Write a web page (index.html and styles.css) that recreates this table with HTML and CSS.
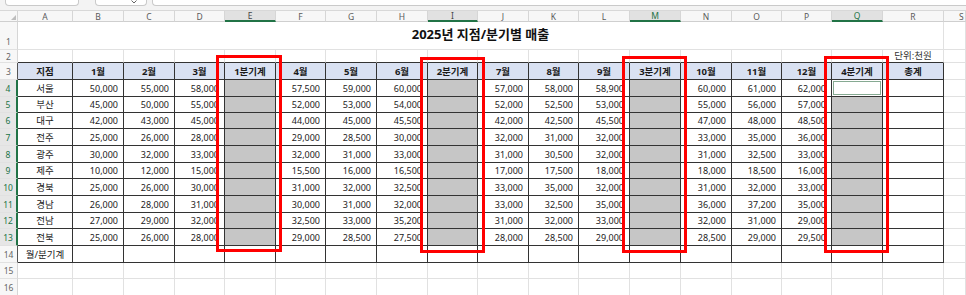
FILE: index.html
```html
<!DOCTYPE html>
<html lang="ko">
<head>
<meta charset="utf-8">
<title>2025년 지점/분기별 매출</title>
<link rel="stylesheet" href="styles.css">
</head>
<body>
<div class="app">
  <div class="toolbar">
    <div class="box name"></div>
    <div class="box fn"><svg class="chev" width="6" height="4" viewBox="0 0 6 4"><polyline points="0.5,0.5 3,3 5.5,0.5" fill="none" stroke="#666" stroke-width="1"/></svg></div>
    <div class="box formula"></div>
  </div>
  <table class="grid">
    <colgroup>
      <col class="w18"><col class="w55"><col class="w51"><col class="w51"><col class="w50"><col class="w51"><col class="w50"><col class="w51"><col class="w51"><col class="w50"><col class="w51"><col class="w50"><col class="w51"><col class="w51"><col class="w51"><col class="w50"><col class="w50"><col class="w51"><col class="w61"><col class="w22">
    </colgroup>
    <tr class="ch">
      <th class="corner"><svg width="5" height="5" viewBox="0 0 5 5"><polygon points="5,0 5,5 0,5" fill="#bdbdbd"/></svg></th>
      <th>A</th><th>B</th><th>C</th><th>D</th><th class="on dk">E</th><th>F</th><th>G</th><th>H</th><th class="on dk">I</th><th>J</th><th>K</th><th>L</th><th class="on">M</th><th>N</th><th>O</th><th>P</th><th class="on">Q</th><th>R</th><th class="sl">S</th>
    </tr>
    <tr class="h28">
      <th class="rh">1</th><td class="title" colspan="18">2025년 지점/분기별 매출</td><td></td>
    </tr>
    <tr class="h13">
      <th class="rh">2</th><td class="top"></td><td class="top"></td><td class="top"></td><td class="top"></td><td class="top"></td><td class="top"></td><td class="top"></td><td class="top"></td><td class="top"></td><td class="top"></td><td class="top"></td><td class="top"></td><td class="top"></td><td class="top"></td><td class="top"></td><td class="top"></td><td class="top"></td><td class="top unit">단위:천원</td><td></td>
    </tr>
    <tr class="tb h17">
      <th class="rh edge">3</th><td class="hd">지점</td><td class="hd">1월</td><td class="hd">2월</td><td class="hd">3월</td><td class="hd">1분기계</td><td class="hd">4월</td><td class="hd">5월</td><td class="hd">6월</td><td class="hd">2분기계</td><td class="hd">7월</td><td class="hd">8월</td><td class="hd">9월</td><td class="hd">3분기계</td><td class="hd">10월</td><td class="hd">11월</td><td class="hd">12월</td><td class="hd">4분기계</td><td class="hd">총계</td><td class="s"></td>
    </tr>
    <tr class="tb h17">
      <th class="rh on">4</th><td class="nm">서울</td><td class="n">50,000</td><td class="n">55,000</td><td class="n">58,000</td><td class="sel"></td><td class="n">57,500</td><td class="n">59,000</td><td class="n">60,000</td><td class="sel"></td><td class="n">57,000</td><td class="n">58,000</td><td class="n">58,900</td><td class="sel"></td><td class="n">60,000</td><td class="n">61,000</td><td class="n">62,000</td><td class="act"></td><td></td><td class="s"></td>
    </tr>
    <tr class="tb h16">
      <th class="rh on">5</th><td class="nm">부산</td><td class="n">45,000</td><td class="n">50,000</td><td class="n">55,000</td><td class="sel"></td><td class="n">52,000</td><td class="n">53,000</td><td class="n">54,000</td><td class="sel"></td><td class="n">52,000</td><td class="n">52,500</td><td class="n">53,000</td><td class="sel"></td><td class="n">55,000</td><td class="n">56,000</td><td class="n">57,000</td><td class="sel"></td><td></td><td class="s"></td>
    </tr>
    <tr class="tb h16">
      <th class="rh on">6</th><td class="nm">대구</td><td class="n">42,000</td><td class="n">43,000</td><td class="n">45,000</td><td class="sel"></td><td class="n">44,000</td><td class="n">45,000</td><td class="n">45,500</td><td class="sel"></td><td class="n">42,000</td><td class="n">42,500</td><td class="n">45,500</td><td class="sel"></td><td class="n">47,000</td><td class="n">48,000</td><td class="n">48,500</td><td class="sel"></td><td></td><td class="s"></td>
    </tr>
    <tr class="tb h17">
      <th class="rh on">7</th><td class="nm">전주</td><td class="n">25,000</td><td class="n">26,000</td><td class="n">28,000</td><td class="sel"></td><td class="n">29,000</td><td class="n">28,500</td><td class="n">30,000</td><td class="sel"></td><td class="n">32,000</td><td class="n">31,000</td><td class="n">32,000</td><td class="sel"></td><td class="n">33,000</td><td class="n">35,000</td><td class="n">36,000</td><td class="sel"></td><td></td><td class="s"></td>
    </tr>
    <tr class="tb h17">
      <th class="rh on">8</th><td class="nm">광주</td><td class="n">30,000</td><td class="n">32,000</td><td class="n">33,000</td><td class="sel"></td><td class="n">32,000</td><td class="n">31,000</td><td class="n">33,000</td><td class="sel"></td><td class="n">31,000</td><td class="n">30,500</td><td class="n">32,000</td><td class="sel"></td><td class="n">31,000</td><td class="n">32,500</td><td class="n">33,000</td><td class="sel"></td><td></td><td class="s"></td>
    </tr>
    <tr class="tb h16">
      <th class="rh on">9</th><td class="nm">제주</td><td class="n">10,000</td><td class="n">12,000</td><td class="n">15,000</td><td class="sel"></td><td class="n">15,500</td><td class="n">16,000</td><td class="n">16,500</td><td class="sel"></td><td class="n">17,000</td><td class="n">17,500</td><td class="n">18,000</td><td class="sel"></td><td class="n">18,000</td><td class="n">18,500</td><td class="n">16,000</td><td class="sel"></td><td></td><td class="s"></td>
    </tr>
    <tr class="tb h17">
      <th class="rh on">10</th><td class="nm">경북</td><td class="n">25,000</td><td class="n">26,000</td><td class="n">30,000</td><td class="sel"></td><td class="n">31,000</td><td class="n">32,000</td><td class="n">32,500</td><td class="sel"></td><td class="n">33,000</td><td class="n">35,000</td><td class="n">32,000</td><td class="sel"></td><td class="n">31,000</td><td class="n">32,000</td><td class="n">33,000</td><td class="sel"></td><td></td><td class="s"></td>
    </tr>
    <tr class="tb h17">
      <th class="rh on">11</th><td class="nm">경남</td><td class="n">26,000</td><td class="n">28,000</td><td class="n">31,000</td><td class="sel"></td><td class="n">30,000</td><td class="n">31,000</td><td class="n">32,000</td><td class="sel"></td><td class="n">33,000</td><td class="n">32,500</td><td class="n">35,000</td><td class="sel"></td><td class="n">36,000</td><td class="n">37,200</td><td class="n">35,000</td><td class="sel"></td><td></td><td class="s"></td>
    </tr>
    <tr class="tb h16">
      <th class="rh on">12</th><td class="nm">전남</td><td class="n">27,000</td><td class="n">29,000</td><td class="n">32,000</td><td class="sel"></td><td class="n">32,500</td><td class="n">33,000</td><td class="n">35,200</td><td class="sel"></td><td class="n">31,000</td><td class="n">32,000</td><td class="n">33,000</td><td class="sel"></td><td class="n">32,000</td><td class="n">31,000</td><td class="n">29,000</td><td class="sel"></td><td></td><td class="s"></td>
    </tr>
    <tr class="tb h17">
      <th class="rh on">13</th><td class="nm">전북</td><td class="n">25,000</td><td class="n">26,000</td><td class="n">28,000</td><td class="sel"></td><td class="n">29,000</td><td class="n">28,500</td><td class="n">27,500</td><td class="sel"></td><td class="n">28,000</td><td class="n">28,500</td><td class="n">29,000</td><td class="sel"></td><td class="n">28,500</td><td class="n">29,000</td><td class="n">29,500</td><td class="sel"></td><td></td><td class="s"></td>
    </tr>
    <tr class="tb h17">
      <th class="rh edge">14</th><td class="nm">월/분기계</td><td></td><td></td><td></td><td></td><td></td><td></td><td></td><td></td><td></td><td></td><td></td><td></td><td></td><td></td><td></td><td></td><td></td><td class="s"></td>
    </tr>
    <tr class="h16">
      <th class="rh">15</th><td></td><td></td><td></td><td></td><td></td><td></td><td></td><td></td><td></td><td></td><td></td><td></td><td></td><td></td><td></td><td></td><td></td><td></td><td></td>
    </tr>
    <tr class="h17">
      <th class="rh">16</th><td></td><td></td><td></td><td></td><td></td><td></td><td></td><td></td><td></td><td></td><td></td><td></td><td></td><td></td><td></td><td></td><td></td><td></td><td></td>
    </tr>
  </table>
  <div class="mark m-e"></div>
  <div class="mark m-i"></div>
  <div class="mark m-m"></div>
  <div class="mark m-q"></div>
</div>
</body>
</html>
```

FILE: styles.css
```css
* { box-sizing: border-box; }
html, body { margin: 0; padding: 0; background: #fff; overflow: hidden; }
body {
  font-family: "Noto Sans", "Noto Sans CJK KR", sans-serif;
  color: #222;
}
.app { position: relative; width: 966px; height: 295px; overflow: hidden; }

/* top toolbar (name box / formula bar edges) */
.toolbar {
  height: 11px;
  background: #f3f3f3;
  border-bottom: 1px solid #d8d8d8;
  display: flex;
  align-items: flex-start;
}
.box {
  height: 6px;
  background: #fff;
  border: 1px solid #cacaca;
  border-top: none;
  border-radius: 0 0 4px 4px;
}
.box.name { margin-left: 5px; width: 74px; }
.box.fn { margin-left: 16px; width: 52px; display: flex; justify-content: flex-end; padding-right: 9px; }
.box.formula { margin-left: 5px; flex: 1; border-right: none; border-radius: 0 0 0 4px; }
.chev { display: block; }

/* sheet grid */
.grid {
  border-collapse: separate;
  border-spacing: 0;
  table-layout: fixed;
  width: 966px;
  font-size: 9px;
  line-height: 11px;
}
.w18 { width: 18px; }
.w55 { width: 55px; }
.w51 { width: 51px; }
.w50 { width: 50px; }
.w61 { width: 61px; }
.w22 { width: 22px; }

.grid td, .grid th {
  padding: 0;
  border-right: 1px solid #e1e1e1;
  border-bottom: 1px solid #e1e1e1;
  white-space: nowrap;
  vertical-align: middle;
  overflow: hidden;
}

.h28 { height: 28px; }
.h13 { height: 13px; }
.h17 { height: 17px; }
.h16 { height: 16px; }

/* column header row */
.ch { height: 11px; }
.ch th {
  background: #f7f7f7;
  color: #5a5a5a;
  font-weight: 400;
  font-size: 8.5px;
  line-height: 9px;
  text-align: center;
  border-right-color: #d6d6d6;
  border-bottom-color: #cfcfcf;
}
.ch th.on {
  background: #e1e1e1;
  color: #217346;
  border-bottom: 2px solid #217346;
}
.ch th.dk { color: #444; }
.ch th.sl { text-align: left; padding-left: 15px; }
.ch th.corner { text-align: right; vertical-align: bottom; padding: 0 1px 1px 0; line-height: 0; }

/* row headers */
.rh {
  background: #f7f7f7;
  color: #666;
  font-weight: 400;
  font-size: 8.5px;
  text-align: center;
  border-right-color: #d6d6d6 !important;
}
.h28 .rh { vertical-align: bottom; padding-bottom: 2px; }
.rh.on {
  background: #e6e6e6;
  color: #217346;
  border-right: 2px solid #217346 !important;
}
.rh.edge { border-right-color: #555 !important; }

/* title & unit */
.title {
  font-size: 13px;
  font-weight: 700;
  text-align: center;
  color: #111;
  line-height: 16px;
  padding-bottom: 4px !important;
}
.top { border-bottom-color: #333 !important; }
.unit { text-align: center; color: #333; line-height: 10px; font-size: 9.5px; }

/* table body */
.tb td { border-right-color: #333; border-bottom-color: #333; }
.tb td.s { border-right-color: #e1e1e1; border-bottom-color: #e1e1e1; }
.hd {
  background: #d9e1f2;
  font-weight: 700;
  text-align: center;
  color: #1a1a1a;
  font-size: 9.5px;
}
.nm { text-align: center; color: #222; font-size: 9.5px; }
.n { text-align: right; padding-right: 5px !important; color: #222; }
.sel { background: #c6c6c6; }
.act { box-shadow: inset 0 0 0 1px #fff, inset 0 0 0 2px #86aa92; }

/* red highlight boxes drawn over the sheet */
.mark {
  position: absolute;
  border: 3px solid #ff0000;
  pointer-events: none;
}
.m-e { left: 216px; top: 55px; width: 66px; height: 197px; }
.m-i { left: 420px; top: 57px; width: 65px; height: 196px; }
.m-m { left: 622px; top: 56px; width: 65px; height: 197px; }
.m-q { left: 824px; top: 56px; width: 65px; height: 197px; }
```
